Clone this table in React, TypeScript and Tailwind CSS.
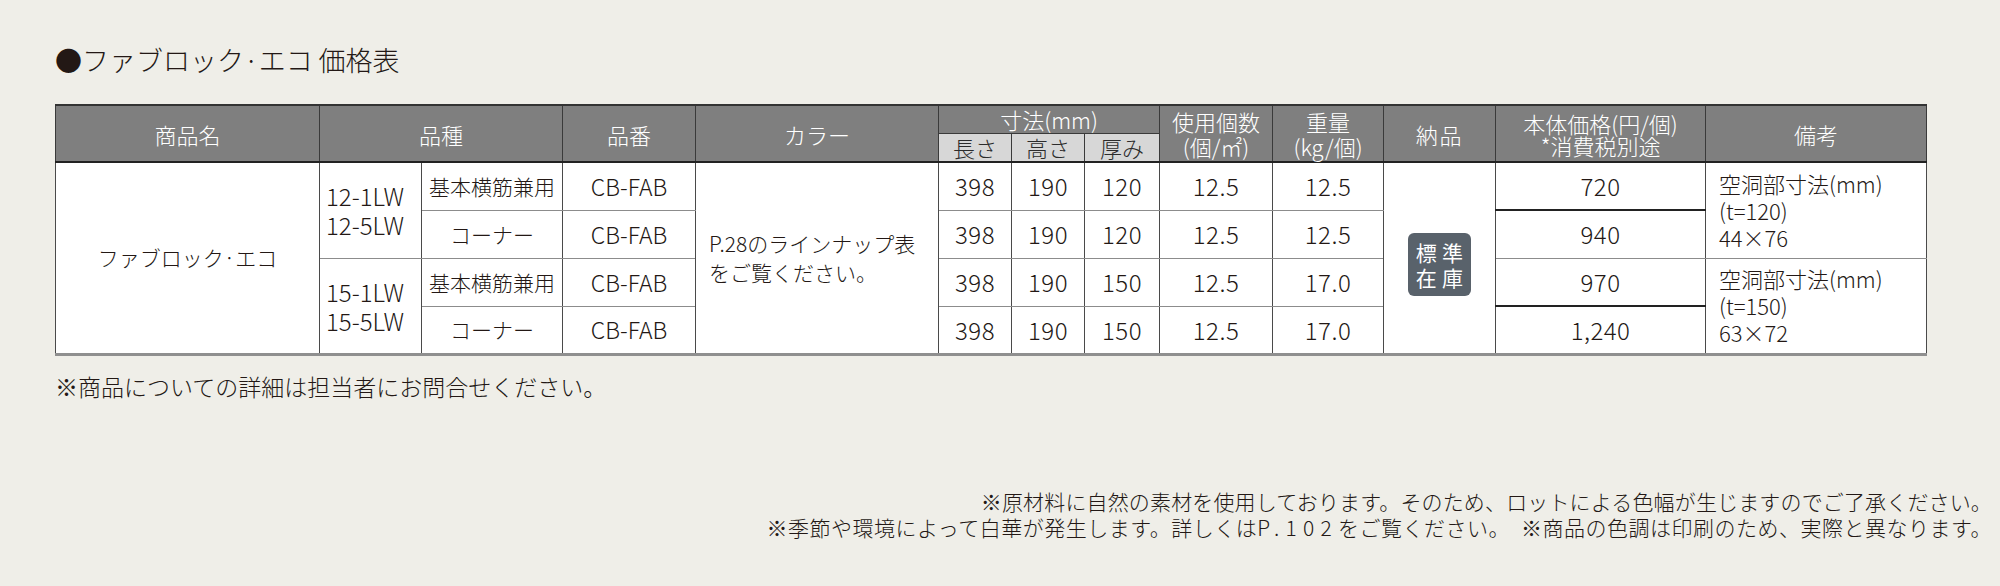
const jp = '[font-family:"Noto_Sans_CJK_JP","Noto_Sans",sans-serif]'

const rows = [
  { kind: '基本横筋兼用', l: 398, h: 190, t: 120, n: '12.5', w: '12.5', price: '720' },
  { kind: 'コーナー', l: 398, h: 190, t: 120, n: '12.5', w: '12.5', price: '940' },
  { kind: '基本横筋兼用', l: 398, h: 190, t: 150, n: '12.5', w: '17.0', price: '970' },
  { kind: 'コーナー', l: 398, h: 190, t: 150, n: '12.5', w: '17.0', price: '1,240' },
]

const widths = [264, 102, 141, 133, 243, 73, 73, 75, 113, 111, 112, 210, 221]

const th = 'bg-[#7f7f7f] text-white font-light text-[22px] border-x border-[#3a3a3a] text-center align-middle'
const sub = 'bg-[#d7d7d7] text-[#2b2b2b] font-light text-[22px] leading-none border-x border-t border-[#3a3a3a] text-center align-middle'
const td = 'border-x border-x-[#4a4a4a] border-y border-y-[#8c8c8c] text-center align-middle'
const num = `${td} text-[24px] leading-none tracking-[0.02em]`

export default function App() {
  return (
    <div className={`w-[2000px] h-[586px] bg-[#efeee8] text-[#231815] font-light ${jp} flex flex-col`}>
      <h1 className="pl-[55px] pt-[45px] text-[27px] leading-[30px] font-light">
        ●ファブロック·エコ 価格表
      </h1>

      <div className="pl-[55px] mt-[29px]">
        <table className="table-fixed border-collapse w-[1871px] bg-white border-t-2 border-t-[#333] border-b-[3px] border-b-[#8f8f8f]">
          <colgroup>
            {widths.map((w, i) => <col key={i} style={{ width: w }} />)}
          </colgroup>
          <thead>
            <tr className="h-[28px]">
              <th rowSpan={2} className={`${th} leading-none`}>商品名</th>
              <th rowSpan={2} colSpan={2} className={`${th} leading-none`}>品種</th>
              <th rowSpan={2} className={`${th} leading-none`}>品番</th>
              <th rowSpan={2} className={`${th} leading-none`}>カラー</th>
              <th colSpan={3} className={`${th} leading-none`}>寸法(mm)</th>
              <th rowSpan={2} className={`${th} leading-[25px]`}>使用個数<br />(個/㎡)</th>
              <th rowSpan={2} className={`${th} leading-[25px]`}>重量<br />(kg/個)</th>
              <th rowSpan={2} className={`${th} leading-none tracking-[0.08em]`}>納品</th>
              <th rowSpan={2} className={`${th} text-[21px] leading-[22px]`}>本体価格(円/個)<br />*消費税別途</th>
              <th rowSpan={2} className={`${th} leading-none`}>備考</th>
            </tr>
            <tr className="h-[29px] border-b-2 border-b-[#222]">
              <th className={sub}>長さ</th>
              <th className={sub}>高さ</th>
              <th className={sub}>厚み</th>
            </tr>
          </thead>
          <tbody>
            {rows.map((r, i) => (
              <tr key={i} className="h-[48px]">
                {i === 0 && (
                  <td rowSpan={4} className={`${td} text-[21px] leading-none`}>ファブロック·エコ</td>
                )}
                {i % 2 === 0 && (
                  <td rowSpan={2} className={`${td} text-left pl-[6px] text-[24px] leading-[29px]`}>
                    {i === 0 ? <>12-1LW<br />12-5LW</> : <>15-1LW<br />15-5LW</>}
                  </td>
                )}
                <td className={`${td} text-[21px] leading-none`}>{r.kind}</td>
                <td className={`${td} text-[23px] leading-none`}>CB-FAB</td>
                {i === 0 && (
                  <td rowSpan={4} className={`${td} text-left pl-[13px] text-[21px] leading-[29px]`}>
                    P.28のラインナップ表<br />をご覧ください。
                  </td>
                )}
                <td className={num}>{r.l}</td>
                <td className={num}>{r.h}</td>
                <td className={num}>{r.t}</td>
                <td className={num}>{r.n}</td>
                <td className={num}>{r.w}</td>
                {i === 0 && (
                  <td rowSpan={4} className={`${td} pt-[14px] leading-none`}>
                    <span className="inline-flex flex-col items-center justify-center w-[63px] h-[63px] rounded-[6px] bg-[#59626b] text-white font-normal text-[21px] leading-[25px] tracking-[0.25em] pl-[5px]">
                      <span>標準</span>
                      <span>在庫</span>
                    </span>
                  </td>
                )}
                <td className={`${num} ${i === 0 || i === 2 ? 'border-b-2 border-b-[#222]' : ''}`}>
                  {r.price}
                </td>
                {i % 2 === 0 && (
                  <td rowSpan={2} className={`${td} text-left pl-[13px] text-[22px] leading-[27px]`}>
                    空洞部寸法(mm)<br />
                    (t={i === 0 ? '120' : '150'})<br />
                    {i === 0 ? '44×76' : '63×72'}
                  </td>
                )}
              </tr>
            ))}
          </tbody>
        </table>
      </div>

      <p className="pl-[55px] mt-[16px] text-[23px] leading-[28px]">
        ※商品についての詳細は担当者にお問合せください。
      </p>

      <div className="mt-auto mb-[46px] pr-[8px] text-right text-[21px] leading-[26px]">
        <p className="tracking-[0.15px]">※原材料に自然の素材を使用しております。そのため、ロットによる色幅が生じますのでご了承ください。</p>
        <p className="tracking-[0.5px]">
          ※季節や環境によって白華が発生します。詳しくは<span className="tracking-[0.3em]">P.102</span>をご覧ください。　※商品の色調は印刷のため、実際と異なります。
        </p>
      </div>
    </div>
  )
}
